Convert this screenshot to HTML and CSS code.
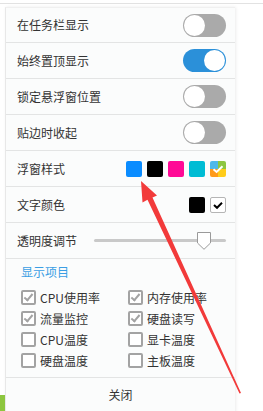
FILE: index.html
```html
<!DOCTYPE html>
<html>
<head>
<meta charset="utf-8">
<link rel="stylesheet" href="styles.css">
</head>
<body>
<div class="topline"></div>
<div class="panel">
  <div class="row"><span class="label">在任务栏显示</span><span class="toggle"><span class="knob"></span></span></div>
  <div class="row"><span class="label">始终置顶显示</span><span class="toggle on"><span class="knob"></span></span></div>
  <div class="row"><span class="label">锁定悬浮窗位置</span><span class="toggle"><span class="knob"></span></span></div>
  <div class="row"><span class="label">贴边时收起</span><span class="toggle"><span class="knob"></span></span></div>
  <div class="row"><span class="label">浮窗样式</span>
    <span class="swatches">
      <span class="sw blue"></span>
      <span class="sw black"></span>
      <span class="sw pink"></span>
      <span class="sw cyan"></span>
      <span class="sw multi">
        <svg width="16" height="16" viewBox="0 0 16 16"><rect x="0" y="0" width="8" height="8" fill="#4fb8ea"/><rect x="8" y="0" width="8" height="8" fill="#8cc641"/><rect x="0" y="8" width="8" height="8" fill="#ff9a1a"/><rect x="8" y="8" width="8" height="8" fill="#ffcc1a"/><path d="M3.5 8.2 L6.6 11 L12.5 5.2" fill="none" stroke="#fff" stroke-width="2"/></svg>
      </span>
    </span>
  </div>
  <div class="row"><span class="label">文字颜色</span>
    <span class="swatches">
      <span class="sw black"></span>
      <span class="sw checkw"><svg width="14" height="14" viewBox="0 0 14 14"><path d="M3 7 L6 9.8 L11 4.8" fill="none" stroke="#000" stroke-width="2"/></svg></span>
    </span>
  </div>
  <div class="row"><span class="label">透明度调节</span>
    <span class="slider"><span class="track"></span>
      <svg class="thumb" width="14" height="18" viewBox="0 0 14 18"><path d="M0.5 0.5 H13.5 V11 L7 17.3 L0.5 11 Z" fill="#fff" stroke="#9a9a9a"/></svg>
    </span>
  </div>
  <div class="section">
    <div class="title">显示项目</div>
    <div class="grid">
      <div class="item"><span class="cb checked"></span>CPU使用率</div>
      <div class="item"><span class="cb checked"></span>内存使用率</div>
      <div class="item"><span class="cb checked"></span>流量监控</div>
      <div class="item"><span class="cb checked"></span>硬盘读写</div>
      <div class="item"><span class="cb"></span>CPU温度</div>
      <div class="item"><span class="cb"></span>显卡温度</div>
      <div class="item"><span class="cb"></span>硬盘温度</div>
      <div class="item"><span class="cb"></span>主板温度</div>
    </div>
  </div>
  <div class="close">关闭</div>
</div>
<div class="green"></div>
<svg class="arrow" width="263" height="411" viewBox="0 0 263 411">
  <path d="M141 181 L157 195.5 L152.5 197.5 L241 393 L239.5 393.5 L147.5 199.8 L142.5 202.5 Z" fill="#f23a3a"/>
</svg>
</body>
</html>
```
FILE: styles.css
```css
* { box-sizing: border-box; }
body {
  margin: 0;
  background: #fff;
  font-family: "Noto Sans CJK SC", "Noto Sans", sans-serif;
  font-size: 12px;
  color: #333;
  width: 263px;
  height: 411px;
  overflow: hidden;
  position: relative;
}
.topline {
  height: 1px;
  background: #e2e2e2;
  margin-top: 3px;
}
.panel {
  margin-top: 3px;
  margin-left: 5px;
  width: 230px;
  height: 410px;
  background: #fbfcfc;
  border-left: 1px solid #e8e8e8;
  border-top: 1px solid #f0f0f0;
  box-shadow: 1px 0 3px rgba(0,0,0,0.08);
  display: flex;
  flex-direction: column;
}
.row {
  height: 36px;
  border-bottom: 1px solid #e3e4e4;
  display: flex;
  align-items: center;
  justify-content: space-between;
  padding: 0 9px 0 11px;
  flex-shrink: 0;
}
.row:first-child { height: 35px; }
.label { line-height: 16px; }
.toggle {
  width: 43px;
  height: 23px;
  border-radius: 12px;
  background: #aaaaaa;
  position: relative;
  display: block;
}
.toggle .knob {
  position: absolute;
  top: 1px;
  left: 1px;
  width: 21px;
  height: 21px;
  border-radius: 50%;
  background: #fff;
}
.toggle.on { background: #2b90d9; }
.toggle.on .knob { left: 21px; }
.swatches { display: flex; gap: 5px; }
.sw {
  width: 16px;
  height: 16px;
  border-radius: 2px;
  display: block;
  overflow: hidden;
}
.sw svg { display: block; }
.blue { background: #0a8cff; }
.black { background: #000; }
.pink { background: #ff0a96; }
.cyan { background: #00bcd4; }
.checkw {
  background: #fff;
  border: 1px solid #b5b5b5;
  display: flex;
  align-items: center;
  justify-content: center;
}
.slider {
  width: 132px;
  height: 18px;
  position: relative;
  display: flex;
  align-items: center;
}
.track {
  display: block;
  width: 100%;
  height: 3px;
  background: #c9c9c9;
  border-radius: 2px;
}
.thumb {
  position: absolute;
  left: 103px;
  top: 0;
}
.section {
  padding: 5px 0 6px 15px;
  border-bottom: 1px solid #e3e4e4;
  flex-shrink: 0;
}
.title {
  color: #3a9ee4;
  line-height: 16px;
  font-size: 12px;
}
.grid {
  margin-top: 7px;
  display: grid;
  grid-template-columns: 107px 107px;
  grid-auto-rows: 21px;
}
.item {
  display: flex;
  align-items: center;
  gap: 4px;
  color: #333;
  font-size: 12px;
}
.cb {
  width: 15px;
  height: 15px;
  border: 2px solid #a3a3a3;
  border-radius: 2px;
  background: #fff;
  position: relative;
  flex-shrink: 0;
}
.cb.checked::after {
  content: "";
  position: absolute;
  left: 3px;
  top: 0px;
  width: 3px;
  height: 7px;
  border-right: 2px solid #a3a3a3;
  border-bottom: 2px solid #a3a3a3;
  transform: rotate(40deg);
}
.close {
  height: 33px;
  display: flex;
  align-items: center;
  justify-content: center;
  font-size: 12px;
  color: #333;
}
.green {
  position: absolute;
  left: 0;
  top: 395px;
  width: 5px;
  height: 16px;
  background: #8dc63f;
}
.arrow {
  position: absolute;
  left: 0;
  top: 0;
  pointer-events: none;
}
```
